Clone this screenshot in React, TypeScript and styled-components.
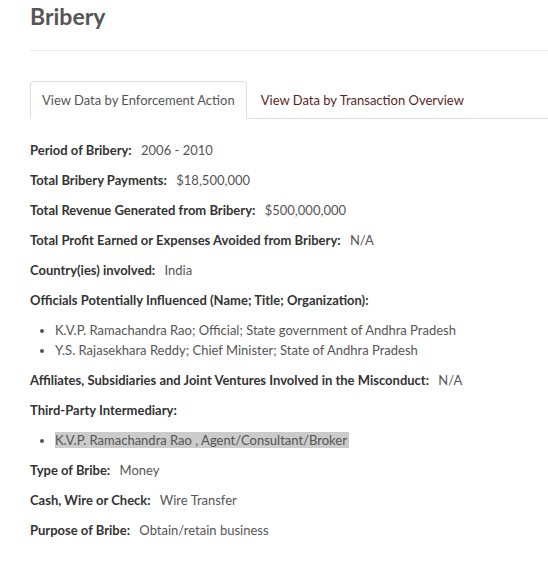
import styled, { createGlobalStyle } from "styled-components";

const GlobalStyle = createGlobalStyle`
  body {
    margin: 0;
    background: #fff;
    font-family: Lato, "Open Sans", sans-serif;
  }
`;

const Page = styled.div`
  padding: 0 0 0 30px;
`;

const Title = styled.h1`
  margin: 0;
  padding: 1px 0 0;
  height: 51px;
  box-sizing: border-box;
  font-size: 23px;
  line-height: 30px;
  font-weight: 700;
  color: #555;
  border-bottom: 1px solid #eaeaea;
`;

const TabBar = styled.ul`
  display: flex;
  list-style: none;
  margin: 30px 0 0;
  padding: 0;
  border-bottom: 1px solid #ddd;
`;

const Tab = styled.li<{ $active?: boolean }>`
  margin: 0 2px -1px 0;
  padding: 0 11px;
  height: 36px;
  display: flex;
  align-items: center;
  font-size: 13px;
  color: ${(p) => (p.$active ? "#555" : "#5a1f1f")};
  border: 1px solid ${(p) => (p.$active ? "#ddd" : "transparent")};
  border-bottom-color: ${(p) => (p.$active ? "#fff" : "#ddd")};
  border-radius: 4px 4px 0 0;
  background: #fff;
`;

const Content = styled.div`
  padding-top: 21px;
  font-size: 13px;
  line-height: 20px;
`;

const Field = styled.p`
  margin: 0 0 10px;
  color: #555;
`;

const Label = styled.strong`
  font-weight: 700;
  color: #333;
  margin-right: 6px;
`;

const List = styled.ul`
  margin: 0 0 10px;
  padding-left: 25px;
  color: #555;
`;

const Highlight = styled.span`
  background: #cbcbcb;
  padding: 0 2px 0 0;
`;

const fieldsTop: [string, string][] = [
  ["Period of Bribery:", "2006 - 2010"],
  ["Total Bribery Payments:", "$18,500,000"],
  ["Total Revenue Generated from Bribery:", "$500,000,000"],
  ["Total Profit Earned or Expenses Avoided from Bribery:", "N/A"],
  ["Country(ies) involved:", "India"],
];

const fieldsBottom: [string, string][] = [
  ["Type of Bribe:", "Money"],
  ["Cash, Wire or Check:", "Wire Transfer"],
  ["Purpose of Bribe:", "Obtain/retain business"],
];

export default function App() {
  return (
    <Page>
      <GlobalStyle />
      <Title>Bribery</Title>
      <TabBar>
        <Tab $active>View Data by Enforcement Action</Tab>
        <Tab>View Data by Transaction Overview</Tab>
      </TabBar>
      <Content>
        {fieldsTop.map(([label, value]) => (
          <Field key={label}>
            <Label>{label}</Label> {value}
          </Field>
        ))}
        <Field>
          <Label>Officials Potentially Influenced (Name; Title; Organization):</Label>
        </Field>
        <List>
          <li>K.V.P. Ramachandra Rao; Official; State government of Andhra Pradesh</li>
          <li>Y.S. Rajasekhara Reddy; Chief Minister; State of Andhra Pradesh</li>
        </List>
        <Field>
          <Label>Affiliates, Subsidiaries and Joint Ventures Involved in the Misconduct:</Label> N/A
        </Field>
        <Field>
          <Label>Third-Party Intermediary:</Label>
        </Field>
        <List>
          <li>
            <Highlight>K.V.P. Ramachandra Rao , Agent/Consultant/Broker</Highlight>
          </li>
        </List>
        {fieldsBottom.map(([label, value]) => (
          <Field key={label}>
            <Label>{label}</Label> {value}
          </Field>
        ))}
      </Content>
    </Page>
  );
}
